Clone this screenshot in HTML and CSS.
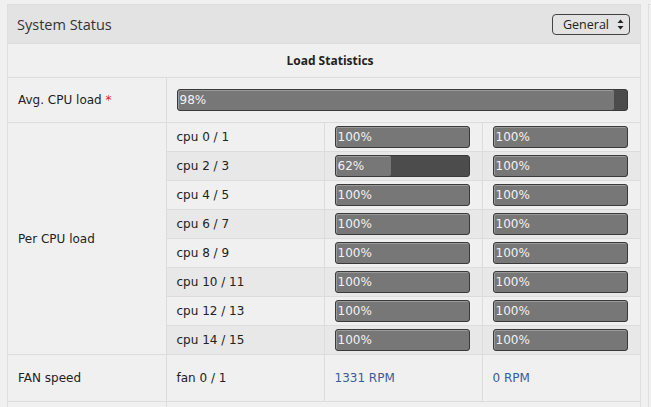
FILE: index.html
```html
<!DOCTYPE html>
<html lang="en">
<head>
    <meta charset="UTF-8">
    <meta name="viewport" content="width=device-width, initial-scale=1.0">
    <title>System Status</title>
    <link rel="stylesheet" href="styles.css">
</head>
<body>
    <div class="page">
        <div class="panel">
            <div class="panel-head">
                <span class="panel-title">System Status</span>
                <div class="select">
                    <span>General</span>
                    <svg class="arrows" width="7" height="11" viewBox="0 0 7 11">
                        <path d="M3.5 0.5 L6.5 4 L0.5 4 Z" fill="#222"/>
                        <path d="M3.5 10.5 L6.5 7 L0.5 7 Z" fill="#222"/>
                    </svg>
                </div>
            </div>
            <table class="stats">
                <tr class="title-row">
                    <th colspan="4">Load Statistics</th>
                </tr>
                <tr class="avg-row">
                    <td class="label">Avg. CPU load <span class="req">*</span></td>
                    <td colspan="3" class="bar-cell wide">
                        <div class="bar"><div class="fill" style="width: 97%">98%</div></div>
                    </td>
                </tr>
                <tr class="cpu-row">
                    <td class="label" rowspan="8">Per CPU load</td>
                    <td>cpu 0 / 1</td>
                    <td class="bar-cell"><div class="bar"><div class="fill" style="width: 100%">100%</div></div></td>
                    <td class="bar-cell"><div class="bar"><div class="fill" style="width: 100%">100%</div></div></td>
                </tr>
                <tr class="cpu-row odd">
                    <td>cpu 2 / 3</td>
                    <td class="bar-cell"><div class="bar"><div class="fill" style="width: 42%">62%</div></div></td>
                    <td class="bar-cell"><div class="bar"><div class="fill" style="width: 100%">100%</div></div></td>
                </tr>
                <tr class="cpu-row">
                    <td>cpu 4 / 5</td>
                    <td class="bar-cell"><div class="bar"><div class="fill" style="width: 100%">100%</div></div></td>
                    <td class="bar-cell"><div class="bar"><div class="fill" style="width: 100%">100%</div></div></td>
                </tr>
                <tr class="cpu-row odd">
                    <td>cpu 6 / 7</td>
                    <td class="bar-cell"><div class="bar"><div class="fill" style="width: 100%">100%</div></div></td>
                    <td class="bar-cell"><div class="bar"><div class="fill" style="width: 100%">100%</div></div></td>
                </tr>
                <tr class="cpu-row">
                    <td>cpu 8 / 9</td>
                    <td class="bar-cell"><div class="bar"><div class="fill" style="width: 100%">100%</div></div></td>
                    <td class="bar-cell"><div class="bar"><div class="fill" style="width: 100%">100%</div></div></td>
                </tr>
                <tr class="cpu-row odd">
                    <td>cpu 10 / 11</td>
                    <td class="bar-cell"><div class="bar"><div class="fill" style="width: 100%">100%</div></div></td>
                    <td class="bar-cell"><div class="bar"><div class="fill" style="width: 100%">100%</div></div></td>
                </tr>
                <tr class="cpu-row">
                    <td>cpu 12 / 13</td>
                    <td class="bar-cell"><div class="bar"><div class="fill" style="width: 100%">100%</div></div></td>
                    <td class="bar-cell"><div class="bar"><div class="fill" style="width: 100%">100%</div></div></td>
                </tr>
                <tr class="cpu-row odd">
                    <td>cpu 14 / 15</td>
                    <td class="bar-cell"><div class="bar"><div class="fill" style="width: 100%">100%</div></div></td>
                    <td class="bar-cell"><div class="bar"><div class="fill" style="width: 100%">100%</div></div></td>
                </tr>
                <tr class="fan-row">
                    <td class="label">FAN speed</td>
                    <td>fan 0 / 1</td>
                    <td class="rpm">1331 RPM</td>
                    <td class="rpm">0 RPM</td>
                </tr>
                <tr class="next-row">
                    <td class="label"></td>
                    <td colspan="3"></td>
                </tr>
            </table>
        </div>
        <div class="panel side"></div>
    </div>
</body>
</html>
```

FILE: styles.css
```css
body {
    margin: 0;
    background-color: #f0f0f0;
    font-family: "DejaVu Sans", Verdana, sans-serif;
    color: #222;
    overflow: hidden;
}

.page {
    display: flex;
    gap: 7px;
    height: 403px;
    padding: 4px 0 0 7px;
    overflow: hidden;
}

.panel {
    flex: 0 0 auto;
    width: 632px;
    border: 1px solid #dedede;
    border-bottom: none;
    background-color: #f0f0f0;
}

.panel.side {
    flex: 1 1 auto;
    width: auto;
    min-width: 0;
    border-right: none;
}

.panel-head {
    display: flex;
    justify-content: space-between;
    align-items: center;
    height: 38px;
    padding: 0 10px 0 9px;
    background-color: #e3e3e3;
    border-bottom: 1px solid #dcdcdc;
}

.panel-title {
    font-family: "Open Sans", "Noto Sans", sans-serif;
    font-size: 14.5px;
    color: #333;
}

.select {
    display: flex;
    align-items: center;
    gap: 8px;
    height: 19px;
    padding: 0 5px 0 10px;
    border: 1px solid #444;
    border-radius: 4px;
    font-family: "Open Sans", "Noto Sans", sans-serif;
    font-size: 12.5px;
    color: #222;
}

.stats {
    width: 100%;
    border-collapse: collapse;
    table-layout: fixed;
    font-size: 12px;
}

.stats th,
.stats td {
    border: 1px solid #dcdcdc;
    padding: 0 10px;
    text-align: left;
    font-weight: normal;
}

.stats tr:first-child th {
    border-top: none;
}

.stats tr > :first-child {
    border-left: none;
}

.stats tr > :last-child {
    border-right: none;
}

.title-row th {
    height: 33px;
    padding-left: 22px;
    text-align: center;
    font-family: "Open Sans", "Noto Sans", sans-serif;
    font-weight: bold;
    font-size: 12px;
    color: #222;
}

.avg-row td {
    height: 44px;
}

.cpu-row td {
    height: 28px;
}

.cpu-row.odd td {
    background-color: #e8e8e8;
}

.cpu-row td.label {
    background-color: #f0f0f0;
}

.label {
    padding-left: 10px;
}

.req {
    color: #e0202a;
}

.bar-cell {
    padding-right: 12px !important;
}

.bar {
    height: 20px;
    border: 1px solid #3a3a3a;
    border-radius: 3px;
    background-color: #4c4c4c;
    overflow: hidden;
}

.fill {
    height: 100%;
    box-sizing: border-box;
    background-color: #777;
    border-top: 1px solid #9a9a9a;
    border-left: 1px solid #9a9a9a;
    border-radius: 2px;
    color: #f2f2f2;
    font-size: 12px;
    line-height: 18px;
    padding-left: 1px;
    white-space: nowrap;
}

.fan-row td {
    height: 46px;
}

.rpm {
    color: #3b5b9b;
}

.next-row td {
    height: 20px;
}
```
